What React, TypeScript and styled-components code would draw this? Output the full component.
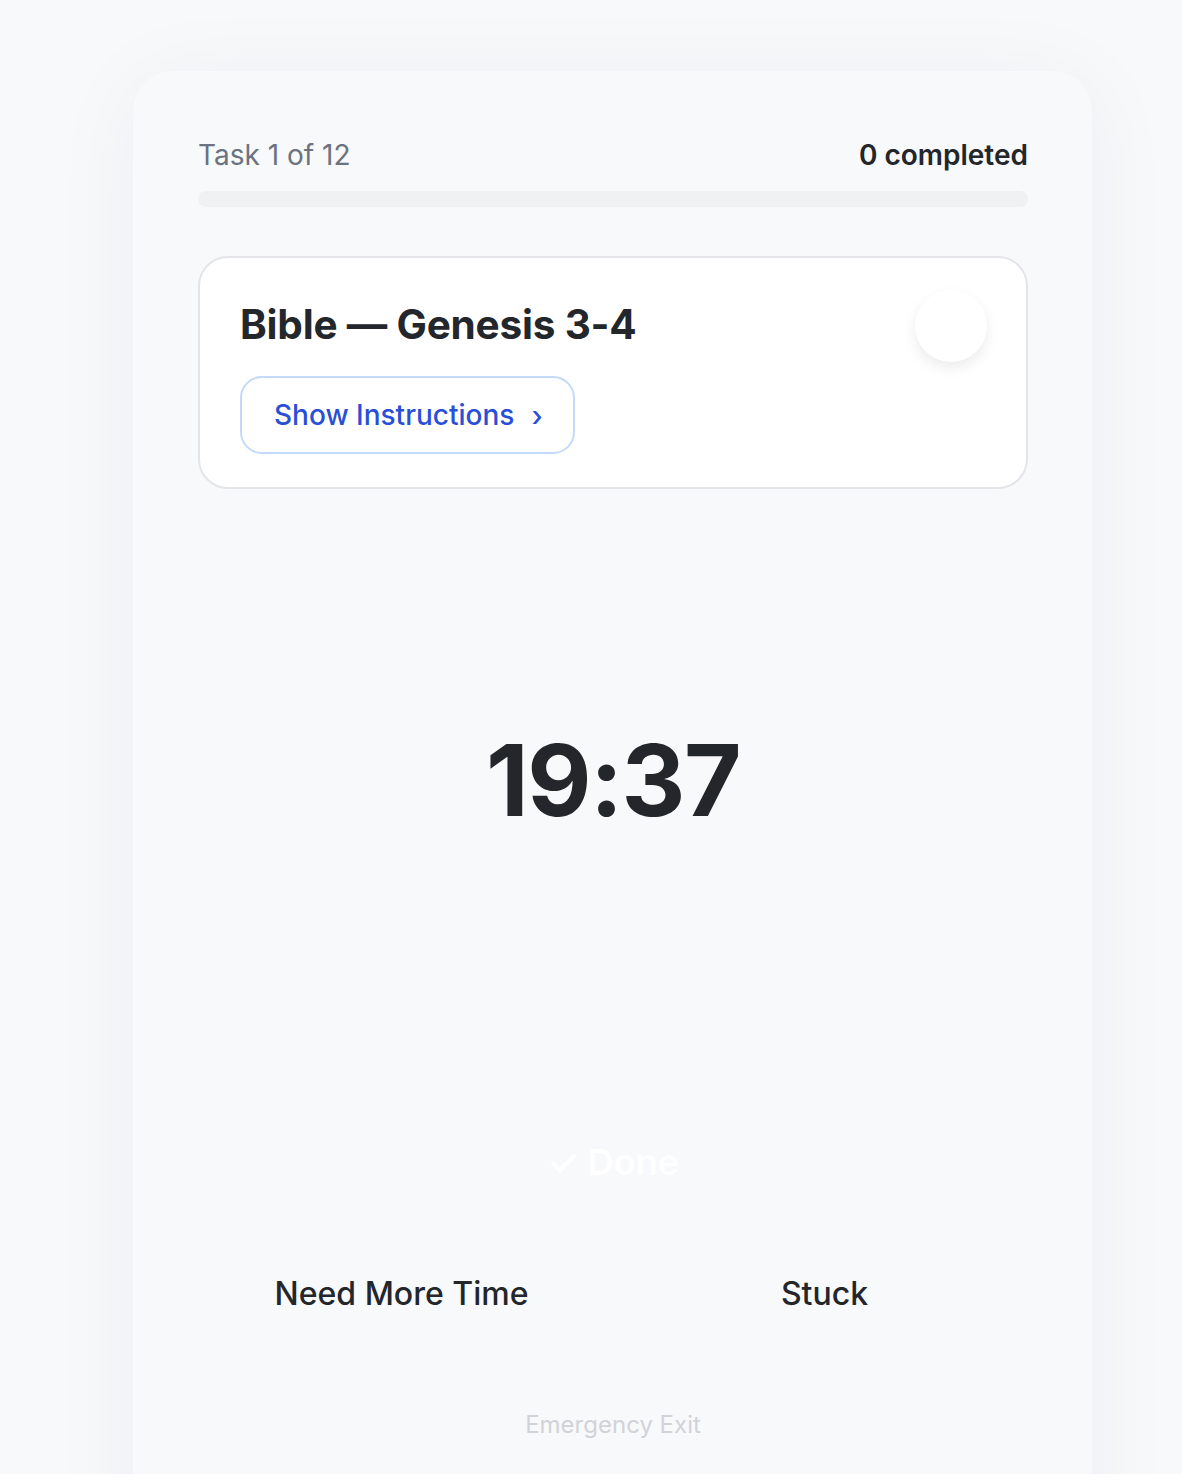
import React from "react";
import styled, { createGlobalStyle } from "styled-components";

const Global = createGlobalStyle`
  html, body { margin: 0; padding: 0; background: #f8f9fb; }
  body { font-family: Inter, "Noto Sans", sans-serif; -webkit-font-smoothing: antialiased; }
  * { box-sizing: border-box; }
`;

const Page = styled.div`
  width: 1182px;
  height: 1474px;
  overflow: hidden;
  display: flex;
  justify-content: flex-start;
  padding: 71px 0 0 133px;
  background: #f8f9fb;
`;

const Shell = styled.div`
  width: 959px;
  min-height: 1500px;
  background: #f8f9fb;
  border-radius: 40px;
  box-shadow: 0 10px 90px rgba(30, 35, 60, 0.05);
  padding: 66px 64px 0 65px;
  display: flex;
  flex-direction: column;
`;

const Header = styled.div`
  display: flex;
  justify-content: space-between;
  align-items: center;
  font-size: 28px;
  line-height: 36px;
`;

const Counter = styled.span`
  color: #6b7280;
  font-weight: 400;
`;

const Completed = styled.span`
  color: #23262b;
  font-weight: 600;
`;

const Track = styled.div`
  margin-top: 18px;
  height: 16px;
  border-radius: 8px;
  background: #f0f1f3;
`;

const TaskCard = styled.div`
  margin-top: 49px;
  height: 233px;
  background: #ffffff;
  border: 2px solid #e3e5e9;
  border-radius: 30px;
  padding: 32px 39px 0 40px;
  display: flex;
  justify-content: space-between;
  align-items: flex-start;
`;

const TaskInfo = styled.div`
  display: flex;
  flex-direction: column;
  align-items: flex-start;
`;

const Title = styled.h2`
  margin: 9px 0 0;
  font-size: 40.5px;
  line-height: 52px;
  font-weight: 700;
  color: #23262b;
  letter-spacing: -0.2px;
`;

const InstructionsButton = styled.button`
  margin-top: 25px;
  height: 78px;
  padding: 0 30px 0 32px;
  border: 2px solid #c3dafb;
  border-radius: 22px;
  background: #ffffff;
  color: #2a4fd7;
  font-family: Inter, sans-serif;
  font-size: 28px;
  font-weight: 500;
  display: flex;
  align-items: center;
  gap: 17px;
`;

const Chevron = styled.span`
  font-size: 28px;
  line-height: 1;
  position: relative;
  top: 1px;
`;

const CheckCircle = styled.div`
  width: 72px;
  height: 72px;
  border-radius: 50%;
  background: #ffffff;
  box-shadow: 0 6px 14px rgba(0, 0, 0, 0.08);
  flex-shrink: 0;
`;

const Timer = styled.div`
  margin-top: 221px;
  text-align: center;
  font-size: 99px;
  line-height: 140px;
  font-weight: 700;
  color: #23262b;
  letter-spacing: -1.5px;
`;

const DoneButton = styled.button`
  margin: 287px auto 0;
  background: transparent;
  border: none;
  color: #ffffff;
  font-family: Inter, sans-serif;
  font-size: 36px;
  font-weight: 600;
  line-height: 48px;
`;

const Actions = styled.div`
  margin-top: 87px;
  display: grid;
  grid-template-columns: 1fr 1fr;
  gap: 16px;
`;

const ActionButton = styled.button`
  background: transparent;
  border: none;
  color: #23262b;
  font-family: Inter, sans-serif;
  font-size: 32px;
  font-weight: 500;
  line-height: 40px;
  text-align: center;
  padding: 0;
`;

const ExitLink = styled.button`
  margin: 95px auto 0;
  background: transparent;
  border: none;
  color: #d1d3d8;
  font-family: Inter, sans-serif;
  font-size: 24px;
  line-height: 30px;
  font-weight: 400;
`;

export default function App() {
  return (
    <>
      <Global />
      <Page>
        <Shell>
          <Header>
            <Counter>Task 1 of 12</Counter>
            <Completed>0 completed</Completed>
          </Header>
          <Track />
          <TaskCard>
            <TaskInfo>
              <Title>Bible — Genesis 3-4</Title>
              <InstructionsButton>
                Show Instructions <Chevron>›</Chevron>
              </InstructionsButton>
            </TaskInfo>
            <CheckCircle />
          </TaskCard>
          <Timer>19:37</Timer>
          <DoneButton>✓ Done</DoneButton>
          <Actions>
            <ActionButton>Need More Time</ActionButton>
            <ActionButton>Stuck</ActionButton>
          </Actions>
          <ExitLink>Emergency Exit</ExitLink>
        </Shell>
      </Page>
    </>
  );
}
